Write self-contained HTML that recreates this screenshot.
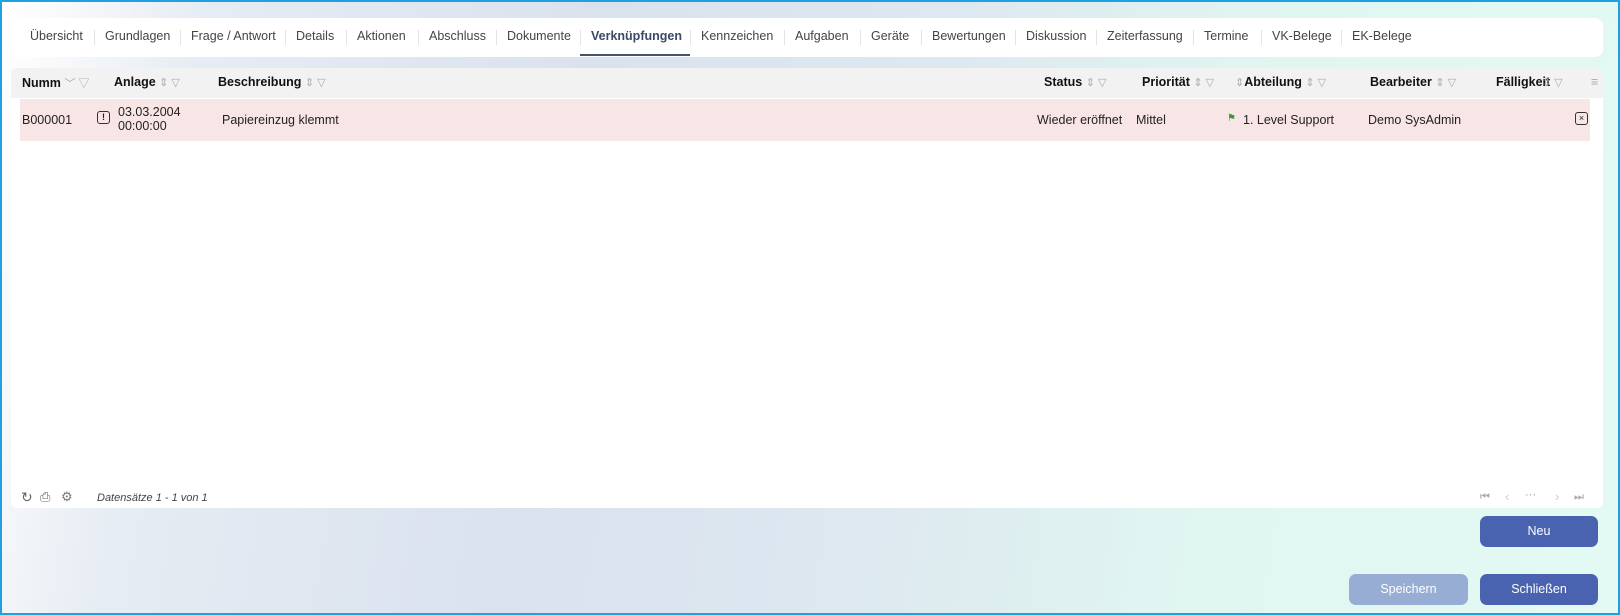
<!DOCTYPE html>
<html><head><meta charset="utf-8"><style>
*{margin:0;padding:0;box-sizing:border-box}
body{width:1620px;height:615px;overflow:hidden;font-family:"Liberation Sans",Arial,sans-serif;font-size:12.5px;color:#222}
#root{position:absolute;left:0;top:0;width:1620px;height:615px;border:2px solid #1ea0e2;
background:linear-gradient(100deg,#ffffff 0%,#e6ecf3 12%,#dae2ee 35%,#dde8f0 55%,#e0f6f1 75%,#e3faf4 100%)}
.a{position:absolute;white-space:nowrap}
.tabs{position:absolute;left:10px;top:16px;width:1591px;height:39px;background:#fff;border-radius:8px}
.tab{position:absolute;top:11px;font-size:12.5px;color:#444}
.sep{position:absolute;top:12px;width:1px;height:15px;background:#e3e3e3}
.panel{position:absolute;left:9px;top:66px;width:1592px;height:440px;background:#fff;border-radius:6px;overflow:hidden}
.hdr{position:absolute;left:0;top:0;width:1592px;height:30px;background:#f2f2f2}
.h{position:absolute;top:7px;font-weight:bold;font-size:12.5px;color:#111}
.ic{color:#aaa;font-weight:normal;font-size:11px}
.row{position:absolute;left:9px;top:31px;width:1570px;height:42px;background:#f8e6e6}
.btn{position:absolute;height:31px;border-radius:7px;color:#fff;font-size:12.5px;text-align:center;line-height:31px}
</style></head><body><div id="root">
<div class="tabs">
<span class="tab" style="left:18px">Übersicht</span>
<span class="sep" style="left:82px"></span>
<span class="tab" style="left:93px">Grundlagen</span>
<span class="sep" style="left:168px"></span>
<span class="tab" style="left:179px">Frage / Antwort</span>
<span class="sep" style="left:273px"></span>
<span class="tab" style="left:284px">Details</span>
<span class="sep" style="left:334px"></span>
<span class="tab" style="left:345px">Aktionen</span>
<span class="sep" style="left:406px"></span>
<span class="tab" style="left:417px">Abschluss</span>
<span class="sep" style="left:484px"></span>
<span class="tab" style="left:495px">Dokumente</span>
<span class="sep" style="left:568px"></span>
<span class="tab" style="left:579px;font-weight:bold;color:#3a4a66">Verknüpfungen</span>
<div style="position:absolute;left:568px;top:36px;width:110px;height:2px;background:#44546e"></div>
<span class="sep" style="left:678px"></span>
<span class="tab" style="left:689px">Kennzeichen</span>
<span class="sep" style="left:772px"></span>
<span class="tab" style="left:783px">Aufgaben</span>
<span class="sep" style="left:848px"></span>
<span class="tab" style="left:859px">Geräte</span>
<span class="sep" style="left:909px"></span>
<span class="tab" style="left:920px">Bewertungen</span>
<span class="sep" style="left:1003px"></span>
<span class="tab" style="left:1014px">Diskussion</span>
<span class="sep" style="left:1084px"></span>
<span class="tab" style="left:1095px">Zeiterfassung</span>
<span class="sep" style="left:1181px"></span>
<span class="tab" style="left:1192px">Termine</span>
<span class="sep" style="left:1249px"></span>
<span class="tab" style="left:1260px">VK-Belege</span>
<span class="sep" style="left:1329px"></span>
<span class="tab" style="left:1340px">EK-Belege</span>
</div>
<div class="panel">
<div class="hdr">
<span class="h" style="left:11px">Numm <span class="ic">﹀ ▽</span></span>
<span class="h" style="left:103px">Anlage <span class="ic">⇕ ▽</span></span>
<span class="h" style="left:207px">Beschreibung <span class="ic">⇕ ▽</span></span>
<span class="h" style="left:1033px">Status <span class="ic">⇕ ▽</span></span>
<span class="h" style="left:1131px">Priorität <span class="ic">⇕ ▽</span></span>
<span class="h" style="left:1224px"><span class="ic">⇕</span>Abteilung <span class="ic">⇕ ▽</span></span>
<span class="h" style="left:1359px">Bearbeiter <span class="ic">⇕ ▽</span></span>
<span class="h" style="left:1485px;width:54px;overflow:hidden">Fälligkeit</span>
<span class="h" style="left:1531px"><span class="ic">⇕ ▽</span></span>
<span class="h" style="left:1580px;color:#aaa;font-weight:normal">≡</span>
</div>
<div class="row"></div>
<span class="a" style="left:11px;top:45px">B000001</span>
<span class="a" style="left:86px;top:43px;width:13px;height:13px;border:1.3px solid #333;border-radius:3px;font-size:9px;font-weight:bold;text-align:center;line-height:11px">!</span>
<span class="a" style="left:107px;top:37px;line-height:14px">03.03.2004<br>00:00:00</span>
<span class="a" style="left:211px;top:45px">Papiereinzug klemmt</span>
<span class="a" style="left:1026px;top:45px">Wieder eröffnet</span>
<span class="a" style="left:1125px;top:45px">Mittel</span>
<span class="a" style="left:1216px;top:45px;color:#3a9a3a;font-size:10px">⚑</span>
<span class="a" style="left:1232px;top:45px">1. Level Support</span>
<span class="a" style="left:1357px;top:45px">Demo SysAdmin</span>
<span class="a" style="left:1564px;top:44px;width:13px;height:13px;border:1.3px solid #333;border-radius:3px;font-size:9px;text-align:center;line-height:10px">×</span>
<span class="a" style="left:10px;top:421px;color:#666;font-size:14px">↻</span>
<span class="a" style="left:29px;top:421px;color:#666;font-size:13px">⎙</span>
<span class="a" style="left:50px;top:421px;color:#777;font-size:13px">⚙</span>
<span class="a" style="left:86px;top:424px;font-style:italic;font-size:11px;color:#444">Datensätze 1 - 1 von 1</span>
<span class="a" style="left:1469px;top:423px;color:#aaa;font-size:11px">⏮</span>
<span class="a" style="left:1494px;top:421px;color:#ccc;font-size:13px">‹</span>
<span class="a" style="left:1514px;top:421px;color:#999;font-size:11px">···</span>
<span class="a" style="left:1544px;top:421px;color:#ccc;font-size:13px">›</span>
<span class="a" style="left:1563px;top:423px;color:#aaa;font-size:11px">⏭</span>
</div>
<div class="btn" style="left:1478px;top:514px;width:118px;background:#4a63b0">Neu</div>
<div class="btn" style="left:1347px;top:572px;width:119px;background:#98add3">Speichern</div>
<div class="btn" style="left:1478px;top:572px;width:118px;background:#4a63b0">Schließen</div>
</div></body></html>
